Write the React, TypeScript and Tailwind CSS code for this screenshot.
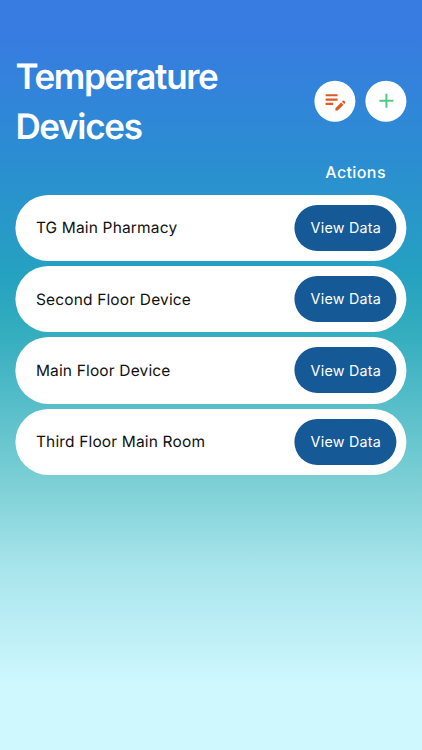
import { MdEditNote, MdAdd } from "react-icons/md";

const devices = ["TG Main Pharmacy", "Second Floor Device", "Main Floor Device", "Third Floor Main Room"];

export default function App() {
  return (
    <main className="min-h-screen w-full bg-[linear-gradient(180deg,#387be1_0%,#387be1_4%,#2b8dd2_21%,#25a2c0_37%,#36aebf_45%,#79ced4_63.5%,#a9e5ec_76%,#cef7fe_91%)] pr-[15.6px] pl-[15.4px] pt-[52px] font-['Inter',sans-serif] [text-rendering:geometricPrecision]">
      <header className="flex items-center justify-between">
        <h1 className="w-[240px] text-[35px] leading-[50px] font-semibold tracking-[-1.3px] text-white">Temperature Devices</h1>
        <div className="flex translate-x-[0.4px] -translate-y-[1.3px] gap-[10px]">
          <button aria-label="Edit" className="flex size-[41px] items-center justify-center rounded-full bg-white text-[#dc5a24]"><MdEditNote size={26} /></button>
          <button aria-label="Add" className="flex size-[41px] items-center justify-center rounded-full bg-white text-[#4fca82]"><MdAdd size={24} /></button>
        </div>
      </header>
      <div className="mt-[7px] flex h-[26px] items-center justify-end pr-[20.5px] text-[16px] font-medium tracking-[0.4px] text-white">Actions</div>
      <ul className="mt-[9.8px] flex translate-x-[0.4px] flex-col gap-[5.1px]">
        {devices.map((d) => (
          <li key={d} className="flex h-[66.2px] items-center justify-between rounded-[33px] bg-white pr-[10px] pl-[20.1px] text-[15.5px] tracking-[0.16px] text-[#111]">
            <span className="translate-y-[0.4px]">{d}</span>
            <button className="h-[46px] w-[102px] rounded-full bg-[#155a96] text-[14.3px] tracking-[0.25px] text-white"><span className="inline-block translate-y-[0.3px]">View Data</span></button>
          </li>
        ))}
      </ul>
    </main>
  );
}
